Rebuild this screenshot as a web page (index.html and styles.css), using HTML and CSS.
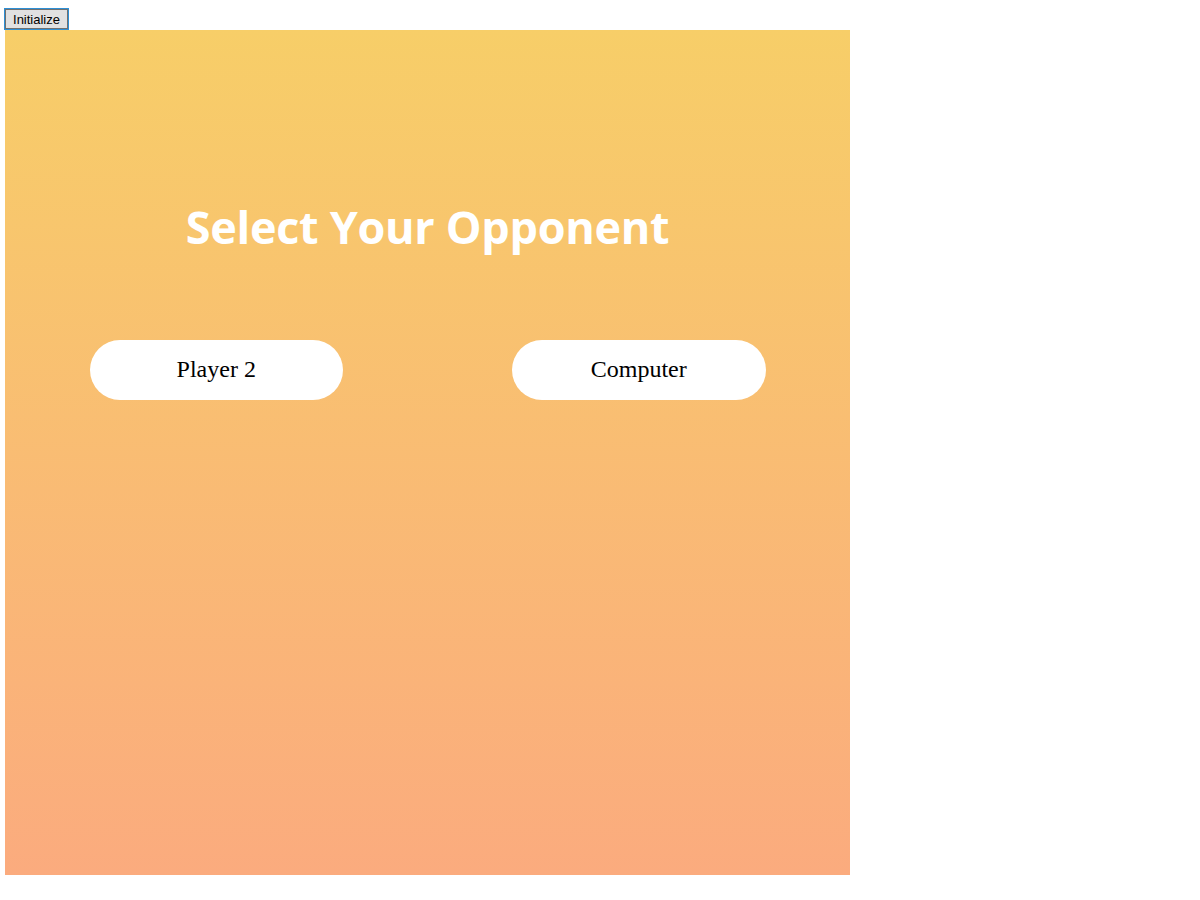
FILE: index.html
```html
<!DOCTYPE html>
<html>
<head>
<meta charset="utf-8">
<title>Select Your Opponent</title>
<link rel="stylesheet" href="styles.css">
</head>
<body>
<button class="init-btn">Initialize</button>
<div class="board">
  <h1 class="title">Select Your Opponent</h1>
  <div class="choices">
    <button class="choice">Player 2</button>
    <button class="choice">Computer</button>
  </div>
</div>
</body>
</html>
```
FILE: styles.css
```css
html, body {
  margin: 0;
  padding: 0;
  background: #fff;
}
body {
  padding: 8px 0 0 4px;
}
.init-btn {
  display: block;
  box-sizing: border-box;
  height: 22px;
  width: 65px;
  margin: 0;
  padding: 0;
  font-family: "Liberation Sans", Arial, sans-serif;
  font-size: 13px;
  color: #000;
  background: #e1e1e1;
  border: 1px solid #2d8fd5;
  box-shadow: inset 0 0 0 1px #707070;
}
.board {
  box-sizing: border-box;
  width: 845px;
  height: 845px;
  margin-left: 1px;
  background: linear-gradient(to top, #fbab7e 0%, #f7ce68 100%);
  display: flex;
  flex-direction: column;
  align-items: center;
  padding-top: 167px;
}
.title {
  margin: 0;
  font-family: "Open Sans", "DejaVu Sans", sans-serif;
  font-weight: 700;
  font-size: 45px;
  line-height: 60px;
  color: #fff;
  letter-spacing: -0.3px;
}
.choices {
  align-self: stretch;
  display: flex;
  justify-content: space-around;
  margin-top: 83px;
}
.choice {
  width: 30%;
  height: 60px;
  border: none;
  border-radius: 30px;
  background: #fff;
  color: #000;
  font-family: "Liberation Serif", "Times New Roman", serif;
  font-size: 24px;
  padding: 0 0 1px 0;
}
```
